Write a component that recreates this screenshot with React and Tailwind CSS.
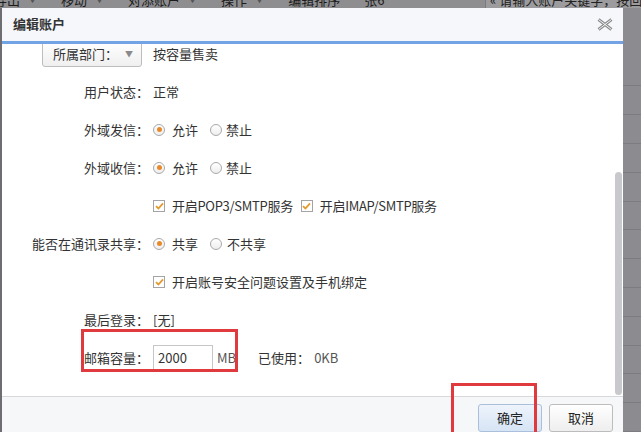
import React from 'react';

const Radio = ({ checked }) => (
  <span className="w-[12px] h-[12px] rounded-full border border-[#a9a9a9] bg-gradient-to-b from-white to-[#eeeeee] flex items-center justify-center shrink-0">
    {checked && <span className="w-[5px] h-[5px] rounded-full bg-[#e8892c]" />}
  </span>
);

const Check = () => (
  <span className="w-[12px] h-[12px] border border-[#a4a4a4] bg-white flex items-center justify-center shrink-0">
    <svg width="9" height="8" viewBox="0 0 9 8">
      <path d="M1 4.2 L3.4 6.5 L8 1.3" fill="none" stroke="#e39a2d" strokeWidth="1.8" />
    </svg>
  </span>
);

const Row = ({ label, children, first }) => (
  <div className={`grid grid-cols-[147px_1fr] gap-x-[4px] h-[38px] items-center ${first ? '-mt-[9px]' : ''}`}>
    <div className="text-right whitespace-nowrap">{label}</div>
    <div className="flex items-center whitespace-nowrap">{children}</div>
  </div>
);

const ToolSep = () => <span className="mx-[10px] w-[4px] h-[8px] border-x border-[#6a6a6a]" />;

export default function App() {
  return (
    <div className="w-[641px] h-[432px] relative overflow-hidden bg-[#8c8c90] text-[13px] leading-[18px] text-[#333] font-['Noto_Sans_CJK_SC',sans-serif]">
      {/* toolbar behind overlay */}
      <div className="h-[8px] flex items-start overflow-hidden bg-[#8e8e90] text-[#1c1c1c]">
        <div className="flex items-start -mt-[9px] -ml-[6px]">
          <span>导出</span><span className="ml-[8px] text-[9px] text-[#555]">▼</span><ToolSep />
          <span>移动</span><span className="ml-[8px] text-[9px] text-[#555]">▼</span><ToolSep />
          <span>对添账户</span><span className="ml-[8px] text-[9px] text-[#555]">▼</span><ToolSep />
          <span>操作</span><span className="ml-[8px] text-[9px] text-[#555]">▼</span><ToolSep />
          <span>编辑排序</span><ToolSep />
          <span>张6</span>
        </div>
        <div className="ml-auto w-[156px] h-[8px] bg-[#9c9c9e] border-l border-[#7a7a7c] flex overflow-hidden">
          <span className="-mt-[9px] ml-[4px] whitespace-nowrap text-[#222]">« 请输入账户关键字，按回</span>
        </div>
      </div>

      <div className="flex h-[424px]">
        <div className="w-[2px] bg-[#6e6e72]" />

        {/* dialog */}
        <div className="w-[621px] flex flex-col bg-white">
          <div className="h-[33px] bg-[#f5f7fb] flex items-center justify-between pl-[11px] pr-[10px]">
            <span className="font-bold text-[#333]">编辑账户</span>
            <svg width="16" height="13" viewBox="0 0 16 13">
              <path d="M1.5 1.5 L14.5 11.5 M14.5 1.5 L1.5 11.5" stroke="#8a8a8a" strokeWidth="3" />
              <path d="M1.5 1.5 L14.5 11.5 M14.5 1.5 L1.5 11.5" stroke="#f5f7fb" strokeWidth="1" />
            </svg>
          </div>
          <div className="h-[3px] bg-[#72a3e5]" />

          <div className="h-[354px] relative overflow-hidden">
            <div className="flex flex-col">
              <Row
                first
                label={
                  <div className="inline-flex items-center justify-between w-[100px] h-[26px] mr-[7px] pl-[10px] pr-[8px] border border-[#bdbdbd] rounded-[3px] bg-gradient-to-b from-white to-[#efefef] align-middle">
                    <span>所属部门：</span>
                    <span className="text-[8px] text-[#8a8a8a]">▼</span>
                  </div>
                }
              >
                按容量售卖
              </Row>
              <Row label="用户状态：">正常</Row>
              <Row label="外域发信：">
                <Radio checked /><span className="ml-[7px]">允许</span>
                <span className="ml-[12px]"><Radio /></span><span className="ml-[4px]">禁止</span>
              </Row>
              <Row label="外域收信：">
                <Radio checked /><span className="ml-[7px]">允许</span>
                <span className="ml-[12px]"><Radio /></span><span className="ml-[4px]">禁止</span>
              </Row>
              <Row label="">
                <Check /><span className="ml-[7px] tracking-[-0.3px]">开启POP3/SMTP服务</span>
                <span className="ml-[8px]"><Check /></span><span className="ml-[7px] tracking-[-0.3px]">开启IMAP/SMTP服务</span>
              </Row>
              <Row label="能否在通讯录共享：">
                <Radio checked /><span className="ml-[7px]">共享</span>
                <span className="ml-[12px]"><Radio /></span><span className="ml-[5px]">不共享</span>
              </Row>
              <Row label="">
                <Check /><span className="ml-[7px]">开启账号安全问题设置及手机绑定</span>
              </Row>
              <Row label="最后登录：">[无]</Row>
              <Row label="邮箱容量：">
                <div className="w-[60px] h-[25px] border border-[#c6c6c6] bg-white flex items-center pl-[4px] text-[#333]">2000</div>
                <span className="ml-[4px] text-[#555]">MB</span>
                <span className="ml-[22px]">已使用：</span>
                <span className="ml-[4px] text-[#555]">0KB</span>
              </Row>
            </div>
            {/* scrollbar */}
            <div className="absolute right-[1px] top-[128px] w-[7px] h-[223px] rounded-[4px] bg-[#c8c9cc]" />
          </div>

          <div className="flex-1 border-t border-[#d6d8dc] bg-[#f6f7f9] flex justify-end gap-[7px] pt-[7px] pr-[10px]">
            <button className="w-[64px] h-[28px] rounded-[3px] border border-[#a9bfdc] bg-gradient-to-b from-[#eef4fb] to-[#d6e4f5] text-[#222]">确定</button>
            <button className="w-[64px] h-[28px] rounded-[3px] border border-[#bcbcbc] bg-gradient-to-b from-white to-[#eeeeee] text-[#222]">取消</button>
          </div>
        </div>

        {/* background table on right */}
        <div className="flex-1 flex flex-col">
          <div className="h-[79px] border-b border-[#7c7c80]" />
          {Array.from({ length: 12 }).map((_, i) => (
            <div key={i} className="h-[29px] border-b border-[#7c7c80]" />
          ))}
        </div>
      </div>

      {/* red annotation boxes */}
      <div className="absolute left-[81px] top-[329px] w-[157px] h-[43px] border-[3px] border-[#e0393e]" />
      <div className="absolute left-[451px] top-[383px] w-[86px] h-[60px] border-[3px] border-[#e0393e]" />
    </div>
  );
}
